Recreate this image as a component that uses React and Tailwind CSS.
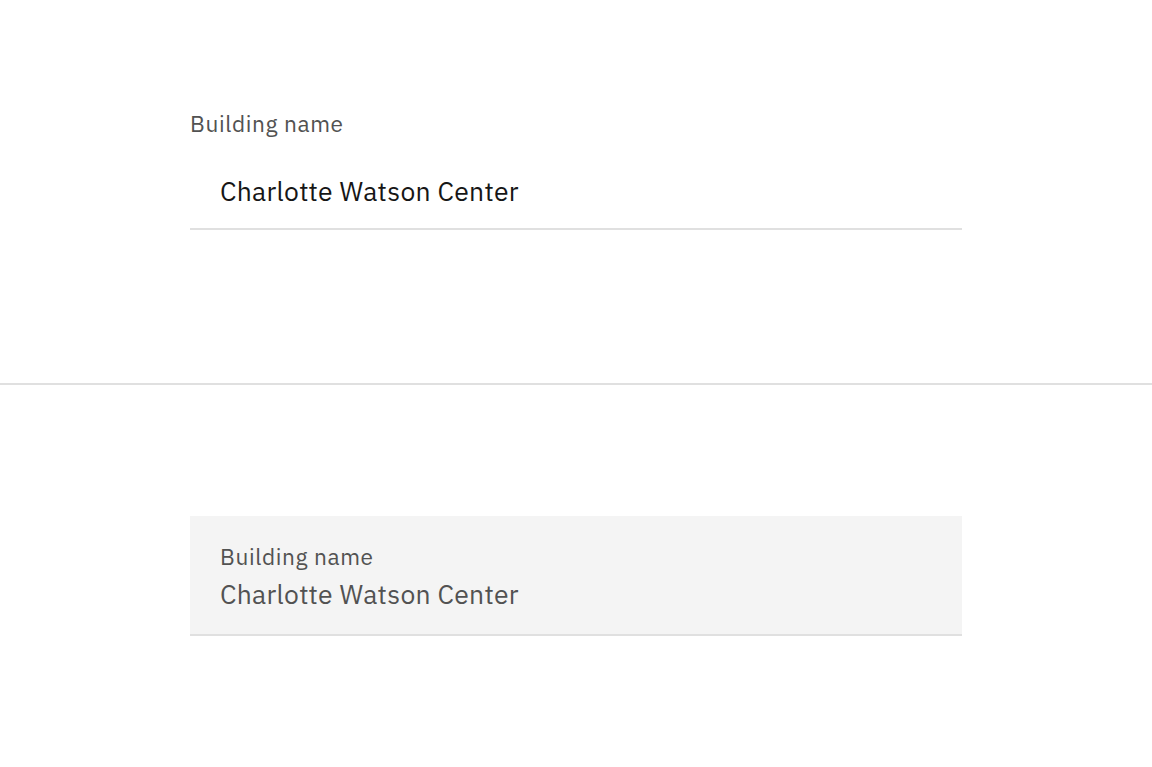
import React from "react";

const font = { fontFamily: '"IBM Plex Sans", "Noto Sans", "Liberation Sans", sans-serif' };

function ReadonlyField() {
  return (
    <div className="w-[772px] flex flex-col">
      <label className="text-[22.7px] leading-[30px] tracking-[0.6px] text-[#525252] mb-[15px]">
        Building name
      </label>
      <div className="h-[76px] flex items-center px-[30px] border-b-2 border-[#e0e0e0]">
        <span className="text-[26.5px] leading-[36px] tracking-[0.3px] text-[#161616]">
          Charlotte Watson Center
        </span>
      </div>
    </div>
  );
}

function FluidField() {
  return (
    <div className="w-[772px] h-[120px] bg-[#f4f4f4] border-b-2 border-[#e0e0e0] px-[30px] pt-[26px] flex flex-col">
      <label className="text-[22.7px] leading-[30px] tracking-[0.6px] text-[#525252]">
        Building name
      </label>
      <span className="text-[26.5px] leading-[36px] tracking-[0.3px] text-[#525252] mt-[4px]">
        Charlotte Watson Center
      </span>
    </div>
  );
}

export default function App() {
  return (
    <div className="w-full min-h-screen bg-white" style={font}>
      <section className="h-[385px] border-b-2 border-[#e0e0e0] flex justify-center pt-[109px]">
        <ReadonlyField />
      </section>
      <section className="h-[382px] flex justify-center pt-[131px]">
        <FluidField />
      </section>
    </div>
  );
}
